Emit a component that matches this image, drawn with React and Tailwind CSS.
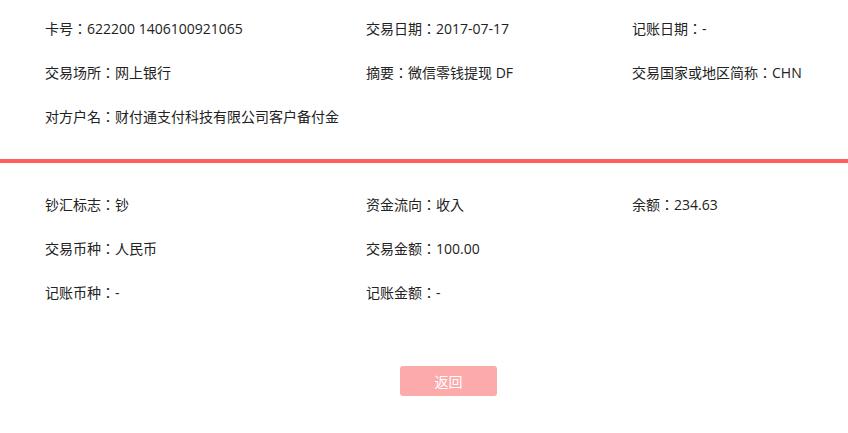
import React from "react";

const topRows = [
    ["卡号：622200 1406100921065", "交易日期：2017-07-17", "记账日期：-"],
    ["交易场所：网上银行", "摘要：微信零钱提现 DF", "交易国家或地区简称：CHN"],
    ["对方户名：财付通支付科技有限公司客户备付金", "", ""],
];

const bottomRows = [
    ["钞汇标志：钞", "资金流向：收入", "余额：234.63"],
    ["交易币种：人民币", "交易金额：100.00", ""],
    ["记账币种：-", "记账金额：-", ""],
];

function InfoRows({ rows }) {
    return (
        <div className="pl-[45px]">
            {rows.map((row, i) => (
                <div key={i} className="grid grid-cols-[321px_266px_1fr] h-[44px] items-center">
                    {row.map((cell, j) => (
                        <div key={j} className="whitespace-nowrap leading-[20px]">
                            {cell}
                        </div>
                    ))}
                </div>
            ))}
        </div>
    );
}

export default function App() {
    return (
        <div
            className="w-[848px] h-[433px] bg-white text-[14px] text-[#222]"
            style={{ fontFamily: '"Open Sans", "Noto Sans CJK JP", sans-serif' }}
        >
            {/* Top block */}
            <div className="pt-[7px] pb-[20px]">
                <InfoRows rows={topRows} />
            </div>

            <div className="h-[4px] bg-[#ff5f5f]" />

            {/* Bottom block */}
            <div className="pt-[20px]">
                <InfoRows rows={bottomRows} />
            </div>

            <div className="mt-[51px] pl-[400px]">
                <button className="w-[97px] h-[30px] rounded-[3px] bg-[#fcaaaa] text-white text-[14px]">
                    返回
                </button>
            </div>
        </div>
    );
}
